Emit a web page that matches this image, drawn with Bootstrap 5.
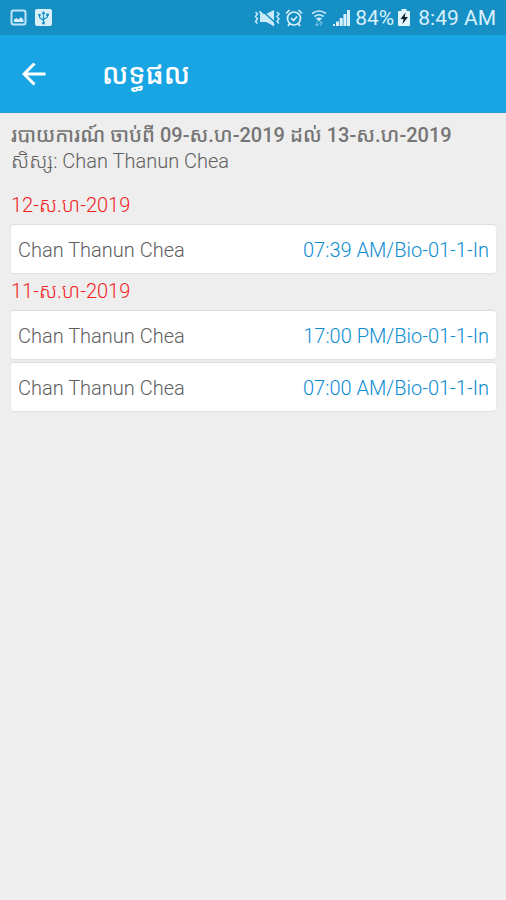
<!DOCTYPE html>
<html lang="km">
<head>
<meta charset="utf-8">
<meta name="viewport" content="width=device-width, initial-scale=1">
<title>លទ្ធផល</title>
<link href="https://cdn.jsdelivr.net/npm/bootstrap@5.3.0/dist/css/bootstrap.min.css" rel="stylesheet">
<style>
  body { background: #eee; color: #606060; font-family: Roboto, "Noto Sans Khmer", "Noto Sans", sans-serif; font-size: 20px; line-height: 26px; font-weight: 300; }
  .status-bar { height: 35px; background: #168fc5; color: #d9f0fb; padding: 0 10px; font-size: 21px; font-weight: 400; }
  .status-icons { gap: 4px; }
  .app-bar { height: 78px; background: #19a5e4; border-bottom: 1px solid #2b9bd0; padding-left: 16px; gap: 50px; }
  .app-title { font-size: 28px; line-height: 36px; font-weight: 500; padding-top: 2px; }
  .back-btn { width: 36px; height: 36px; }
  .page-body { padding: 9px 10px 0 11px; }
  .report-range { color: #757575; font-size: 20px; line-height: 26px; font-weight: 500; }
  .student-name { margin-bottom: 18px; }
  .day-title { color: #f51c1c; font-size: 20px; line-height: 26px; font-weight: 300; margin-bottom: 7px; }
  .day-group { margin-bottom: 5px; }
  .result-item { background: #fff; min-height: 48px; padding: 2px 7px 0; border-radius: 3px; box-shadow: 0 -1px 1px #dcdcdc, 0 1px 1px #dedede; }
  .result-link { color: #0c8cd2; }
</style>
</head>
<body>
<div class="status-bar d-flex align-items-center justify-content-between">
  <div class="d-flex align-items-center gap-2">
    <svg width="17" height="17" viewBox="0 0 17 17" aria-hidden="true"><rect x="1.500" y="1.500" width="14" height="14" rx="2" fill="none" stroke="#bfe6f8" stroke-width="2"/><path d="M4 13V10.500L6.500 9l2 1.500L11 8l2.500 3v2z" fill="#d9f0fb"/></svg>
    <svg width="17" height="17" viewBox="0 0 17 17" aria-hidden="true"><rect width="17" height="17" rx="2" fill="#d9f0fb"/><g fill="none" stroke="#168fc5" stroke-width="1.200"><path d="M8.500 3v11M4.500 6v2.500l4 3M12.500 5.500V8l-4 2.500"/></g><path d="M6.500 5l2-3 2 3z" fill="#168fc5"/><circle cx="8.500" cy="14" r="1.500" fill="#168fc5"/><circle cx="4.500" cy="6" r="1.300" fill="#168fc5"/><path d="M11.200 4.500h2.600v2.600h-2.600z" fill="#168fc5"/></svg>
  </div>
  <div class="status-icons d-flex align-items-center">
    <svg width="27" height="18" viewBox="0 0 27 18" fill="none" stroke="#c9eafa" stroke-width="1.500" aria-hidden="true"><path d="M1.500 3l2 2-2 2.500 2 2.500-2 2.500 2 2M23 3l2 2-2 2.500 2 2.500-2 2.500 2 2"/><path d="M6 5h6l8-4v16l-8-4H6z" fill="#c9eafa" stroke="none"/><path d="M8 1.500l13 12" stroke="#168fc5" stroke-width="1.500"/><path d="M5.500 2.500l14.500 14" stroke-width="2"/></svg>
    <svg width="18" height="18" viewBox="0 0 18 18" fill="none" stroke="#d9f0fb" stroke-width="1.700" aria-hidden="true"><circle cx="9" cy="9.500" r="6.500"/><path d="M6 9l2.500 2.500L12 7.500M1 4.500l3.500-3.500M17 4.500l-3.500-3.500M5 14l-2 3M13 14l2 3"/></svg>
    <svg class="ms-1" width="18" height="18" viewBox="0 0 18 18" fill="none" stroke="#c9eafa" stroke-width="1.700" aria-hidden="true"><path d="M1 4.500q7-5 14 0M3.500 7.500q4.500-3.500 9 0"/><path d="M5 9.500q3-2 6 0l-3 3z" fill="#c9eafa" stroke="none"/><path d="M6 12.500v4M4.300 15l1.700 2 1.700-2M10 17v-4M8.600 14.500l1.400-2 1.400 2" stroke-width="1" stroke="#7cc5e6"/></svg>
    <svg width="18" height="18" viewBox="0 0 18 18" fill="#d9f0fb" aria-hidden="true"><path d="M0 15h2v2H0zM3 12.500h3V17H3zM6.700 9h3v8h-3zM10.400 5h3v12h-3zM14 1h3v16h-3z"/></svg>
    <span>84%</span>
    <svg width="12" height="17" viewBox="0 0 12 17" aria-hidden="true"><path d="M3.500 0h5v2H11q1 0 1 1v13q0 1-1 1H1q-1 0-1-1V3q0-1 1-1h2.500z" fill="#e4f5fd"/><path d="M7.500 3.500L2.500 10h3L4.500 15 10 8H6.800z" fill="#123"/></svg>
    <span class="ms-1">8:49 AM</span>
  </div>
</div>
<header class="app-bar d-flex align-items-center text-white">
  <button type="button" class="back-btn btn p-0 border-0 text-white d-flex align-items-center justify-content-center" aria-label="Back">
    <svg width="24" height="24" viewBox="0 0 24 24" fill="none" stroke="currentColor" stroke-width="3" aria-hidden="true"><path d="M23.500 12H2.500M12.500 1.500L2 12l10.500 10.500"/></svg>
  </button>
  <h1 class="app-title mb-0">លទ្ធផល</h1>
</header>
<main class="page-body">
  <h2 class="report-range m-0">របាយការណ៍ ចាប់ពី 09-ស.ហ-2019 ដល់ 13-ស.ហ-2019</h2>
  <p class="student-name">សិស្ស: Chan Thanun Chea</p>
  <section class="day-group">
    <h3 class="day-title">12-ស.ហ-2019</h3>
    <ul class="list-unstyled d-flex flex-column gap-1 m-0">
      <li class="result-item d-flex align-items-center justify-content-between"><span>Chan Thanun Chea</span><a class="result-link text-decoration-none" href="#">07:39 AM/Bio-01-1-In</a></li>
    </ul>
  </section>
  <section class="day-group">
    <h3 class="day-title">11-ស.ហ-2019</h3>
    <ul class="list-unstyled d-flex flex-column gap-1 m-0">
      <li class="result-item d-flex align-items-center justify-content-between"><span>Chan Thanun Chea</span><a class="result-link text-decoration-none" href="#">17:00 PM/Bio-01-1-In</a></li>
      <li class="result-item d-flex align-items-center justify-content-between"><span>Chan Thanun Chea</span><a class="result-link text-decoration-none" href="#">07:00 AM/Bio-01-1-In</a></li>
    </ul>
  </section>
</main>
<script src="https://cdn.jsdelivr.net/npm/bootstrap@5.3.0/dist/js/bootstrap.bundle.min.js"></script>
</body>
</html>
